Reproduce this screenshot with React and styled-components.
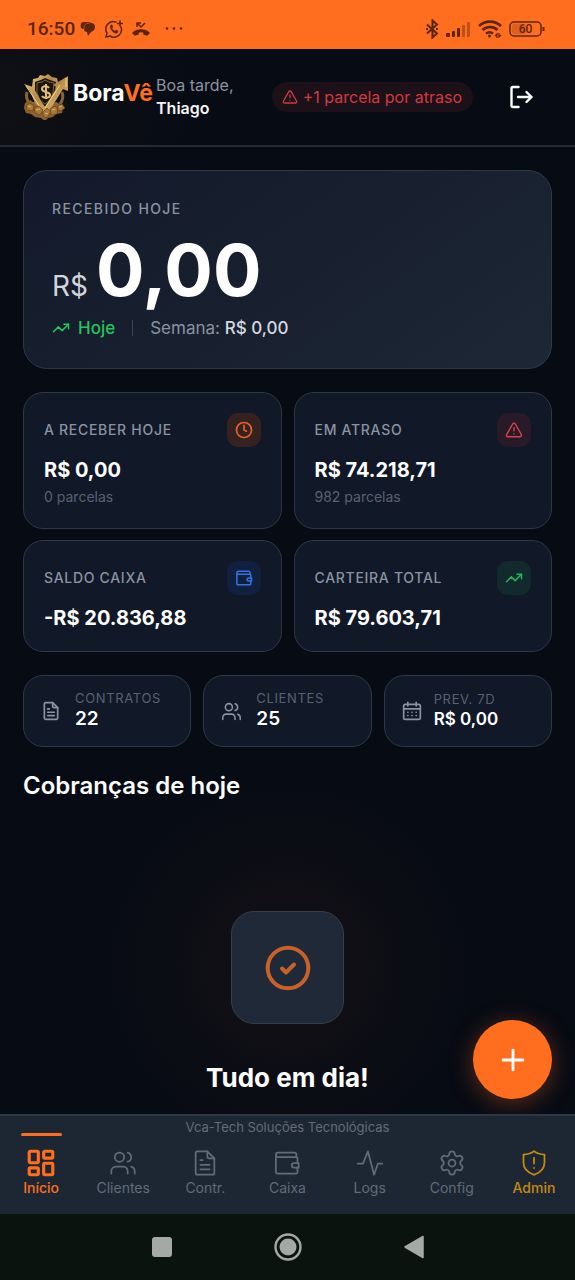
import React from 'react'
import styled, { createGlobalStyle } from 'styled-components'
import { Plus, Settings, TrendingUp, TriangleAlert, Users } from 'lucide-react'

const GlobalStyle = createGlobalStyle`
  * {
    box-sizing: border-box;
  }
  body {
    margin: 0;
    background: #070b14;
    font-family: Inter, 'Liberation Sans', sans-serif;
  }
  h1, h2, p {
    margin: 0;
  }
  svg {
    display: block;
    flex: none;
  }
`

const Screen = styled.div`
  min-height: 100vh;
  display: flex;
  flex-direction: column;
  color: #fff;
`

/* device bars */

const StatusBar = styled.div`
  display: flex;
  align-items: center;
  justify-content: space-between;
  height: 49px;
  padding: 8px 30px 0 27px;
  background: #ff6d1f;
  color: #5c2409;
`

const StatusGroup = styled.div`
  display: flex;
  align-items: center;
  gap: ${props => props.$gap}px;
`

const Clock = styled.span`
  margin-right: -4px;
  font: 500 19px/24px Roboto, sans-serif;
`

const SystemBar = styled.div`
  display: flex;
  align-items: center;
  justify-content: center;
  gap: 101px;
  height: 66px;
  background: #0b130f;
`

const SystemButton = styled.button`
  padding: 0;
  border: 0;
  background: none;
  color: #a5a9a6;
`

/* header */

const Header = styled.header`
  display: flex;
  align-items: center;
  height: 98px;
  padding: 0 23px;
  border-bottom: 2px solid #252a33;
  background: radial-gradient(circle at 0 50%, #0f1014, transparent 200px);
`

const Brand = styled.h1`
  margin: 0 3px 8px 5px;
  font-size: 23px;
  line-height: 32px;
  font-weight: 700;
  span {
    color: #ff6d1f;
  }
`

const Greeting = styled.p`
  font-size: 16px;
  line-height: 23px;
  color: #8b93a1;
  strong {
    display: block;
    font-weight: 600;
    color: #f4f5f7;
  }
`

const LateBadge = styled.div`
  display: flex;
  align-items: center;
  gap: 5px;
  height: 30px;
  margin-left: auto;
  padding: 0 11px 0 10px;
  border-radius: 15px;
  background: #1c1019;
  color: #cf3b42;
  font-size: 16px;
  white-space: nowrap;
`

const LogoutButton = styled.button`
  display: flex;
  justify-content: center;
  width: 62px;
  margin-left: 17px;
  padding: 16px 0;
  border: 0;
  background: none;
  color: #fff;
`

/* content */

const Main = styled.main`
  position: relative;
  flex: 1;
  padding: 23px 23px 18px;
  background: radial-gradient(circle at 50% 820px, #141115, transparent 190px);
`

const Card = styled.section`
  border: 1px solid #2f3846;
  border-radius: 20px;
  background: #111827;
`

const Hero = styled(Card)`
  padding: 28px;
  border-radius: 24px;
  background: linear-gradient(145deg, #13192a, #1d2735);
`

const Label = styled.h2`
  font-size: 14px;
  line-height: 20px;
  font-weight: 500;
  letter-spacing: 0.05em;
  text-transform: uppercase;
  color: #8b93a1;
`

const HeroLabel = styled(Label)`
  letter-spacing: 0.1em;
`

const HeroValue = styled.p`
  display: flex;
  align-items: baseline;
  gap: 8px;
  margin: 15px 0 10px;
  font-size: 72px;
  line-height: 72px;
  font-weight: 700;
  span {
    font-size: 28px;
    line-height: 28px;
    font-weight: 400;
    color: #d1d5db;
  }
`

const HeroFoot = styled.div`
  display: flex;
  align-items: center;
  gap: 17px;
  font-size: 17px;
  line-height: 24px;
  color: #8b93a1;
  strong {
    font-weight: 500;
    color: #d6d9de;
  }
`

const Trend = styled.span`
  display: flex;
  align-items: center;
  gap: 8px;
  font-weight: 500;
  color: #22c55e;
`

const Divider = styled.span`
  width: 1px;
  height: 16px;
  background: #3a4352;
`

const StatGrid = styled.div`
  display: grid;
  grid-template-columns: repeat(2, minmax(0, 1fr));
  gap: 11px 12px;
  margin: 23px 0;
`

const StatCard = styled(Card)`
  padding: 20px;
`

const StatHead = styled.div`
  display: flex;
  align-items: center;
  justify-content: space-between;
  margin-bottom: 10px;
`

const IconBox = styled.span`
  display: grid;
  place-items: center;
  width: 34px;
  height: 34px;
  border-radius: 11px;
  color: ${props => props.$color};
  background: ${props => props.$bg};
`

const StatValue = styled.p`
  font-size: 20px;
  line-height: 26px;
  font-weight: 700;
`

const StatNote = styled.p`
  margin-top: 2px;
  font-size: 14px;
  line-height: 23px;
  color: #596170;
`

const MiniGrid = styled.div`
  display: grid;
  grid-template-columns: repeat(3, minmax(0, 1fr));
  gap: 12px;
`

const MiniCard = styled(Card)`
  display: flex;
  align-items: center;
  gap: ${props => (props.$small ? 12 : 14)}px;
  height: 72px;
  padding: 0 17px;
  color: #8b93a1;
`

const MiniText = styled.div`
  padding-bottom: 5px;
`

const MiniLabel = styled(Label)`
  font-size: 13px;
  font-weight: 400;
  color: #596170;
`

const MiniValue = styled.p`
  font-size: ${props => (props.$small ? 17 : 19)}px;
  line-height: ${props => (props.$small ? 20 : 22)}px;
  font-weight: 600;
  color: #fff;
`

const SectionTitle = styled.h2`
  margin: 23px 0 109px;
  font-size: 24px;
  line-height: 32px;
  font-weight: 600;
`

const EmptyState = styled.div`
  display: flex;
  flex-direction: column;
  align-items: center;
  gap: 36px;
`

const EmptyIcon = styled.div`
  display: grid;
  place-items: center;
  width: 113px;
  height: 113px;
  border: 1px solid #353e4b;
  border-radius: 23px;
  background: #1f2937;
  color: #c7602b;
`

const EmptyTitle = styled.h2`
  font-size: 26px;
  line-height: 36px;
  font-weight: 700;
`

const AddButton = styled.button`
  position: absolute;
  right: 23px;
  bottom: 15px;
  display: grid;
  place-items: center;
  width: 79px;
  height: 79px;
  padding: 0;
  border: 0;
  border-radius: 50%;
  background: #ff6d1f;
  color: #fff;
  box-shadow: 0 4px 24px rgba(255, 109, 31, 0.35);
`

/* bottom navigation */

const Nav = styled.nav`
  position: relative;
  height: 100px;
  border-top: 2px solid #2d3744;
  background: #1d2733;
`

const Credit = styled.p`
  padding-top: 1px;
  font-size: 13px;
  line-height: 20px;
  text-align: center;
  color: #626b78;
`

const NavList = styled.div`
  display: grid;
  grid-template-columns: repeat(7, minmax(0, 1fr));
`

const NavItem = styled.a`
  display: flex;
  flex-direction: column;
  align-items: center;
  font-size: 14px;
  line-height: 20px;
  font-weight: ${props => (props.$strong ? 500 : 400)};
  text-decoration: none;
  color: ${props => props.$color || '#626b78'};
  &::before {
    content: '';
    width: 41px;
    height: 3px;
    margin: -4px 0 13px;
    border-radius: 2px;
    background: ${props => (props.$active ? '#ff6d1f' : 'transparent')};
  }
  svg {
    margin-bottom: 1px;
  }
`

const Icon = ({ size = 28, width = 1.5, children }) => (
  <svg width={size} height={size} viewBox='0 0 24 24' fill='none' stroke='currentColor'
    strokeWidth={width} strokeLinecap='round' strokeLinejoin='round' aria-hidden='true'>
    {children}
  </svg>
)

const HomeIcon = () => (
  <Icon width={2.7}>
    <rect x='1.900' y='1.900' width='7.800' height='9.900' rx='1' />
    <rect x='14.300' y='1.900' width='7.800' height='5.900' rx='1' />
    <rect x='1.900' y='16.200' width='7.800' height='5.900' rx='1' />
    <rect x='14.300' y='12.200' width='7.800' height='9.900' rx='1' />
  </Icon>
)

const FileIcon = props => (
  <Icon {...props}>
    <path d='M14 2H5.500A1.500 1.500 0 0 0 4 3.500v17A1.500 1.500 0 0 0 5.500 22h13a1.500 1.500 0 0 0 1.500-1.500V8z' />
    <path d='M14 2v4.500A1.500 1.500 0 0 0 15.500 8H20M8 9.500h2M8 13.500h8M8 17.500h8' />
  </Icon>
)

const WalletIcon = props => (
  <Icon {...props}>
    <path d='M20 7V4.500A1.500 1.500 0 0 0 18.500 3H4.500a2 2 0 0 0 0 4H20a1 1 0 0 1 1 1v4M2.500 5v14.500A1.500 1.500 0 0 0 4 21h16a1 1 0 0 0 1-1v-4' />
    <path d='M22 12v4h-4a2 2 0 0 1 0-4z' />
  </Icon>
)

const PulseIcon = () => (
  <Icon>
    <path d='M1.500 12.500h4.500l4.200-10.500 5.300 20 3.300-9.500h3.700' />
  </Icon>
)

const CalendarIcon = () => (
  <Icon size={20} width={2}>
    <rect x='2' y='4' width='20' height='18' rx='2' />
    <path d='M2 9.500h20M7 1.500V6M17 1.500V6' />
    <path d='M7 13.500h.1M12 13.500h.1M17 13.500h.1M7 17.500h.1M12 17.500h.1M17 17.500h.1' />
  </Icon>
)

const ClockIcon = () => (
  <Icon size={20} width={2}>
    <circle cx='12' cy='12' r='9' />
    <path d='M12 6.500V12l3 1.500' />
  </Icon>
)

const ShieldIcon = () => (
  <Icon>
    <path d='M12 1.800c2.500 2 5.500 2.700 9 3v7c0 5-3.500 8.400-9 10.400-5.500-2-9-5.400-9-10.400v-7c3.500-.3 6.500-1 9-3z' />
    <path d='M12 7.500v5M12 16.200v.1' />
  </Icon>
)

const LogoutIcon = () => (
  <Icon size={24} width={2.4}>
    <path d='M9.500 2H4A1.500 1.500 0 0 0 2.500 3.500v17A1.500 1.500 0 0 0 4 22h5.500' />
    <path d='M9 12h13.500M17.500 7l5 5-5 5' />
  </Icon>
)

const CheckIcon = () => (
  <svg width='46' height='46' viewBox='0 0 46 46' fill='none' stroke='currentColor' strokeWidth='4'
    strokeLinecap='round' strokeLinejoin='round' aria-hidden='true'>
    <circle cx='23' cy='23' r='20.300' />
    <path d='M17 23.500l4 4 8-8' />
  </svg>
)

const Emblem = () => (
  <svg width='45' height='46' viewBox='0 0 45 46' role='img' aria-label='BoraVê'>
    <defs>
      <linearGradient id='gold' x1='0' y1='0' x2='1' y2='1'>
        <stop offset='0' stopColor='#e3c681' />
        <stop offset='.45' stopColor='#b38643' />
        <stop offset='.7' stopColor='#cda35c' />
        <stop offset='1' stopColor='#6b4720' />
      </linearGradient>
    </defs>
    <path d='M10 5l5-1 2-3 5 1 3-2 4 3 5 1 1 5-2 12-4 6-6 5-7-4-5-7-2-8z' fill='url(#gold)' />
    <path d='M12 8l6-2 4-2 5 2 6 2-1 12-4 7-6 5-6-4-4-8z' fill='#19150f' />
    <path d='M14 9l5-1 3-2 4 2 5 1-1 10-3 7-5 4-5-4-3-7z' fill='none' stroke='#86622e' strokeWidth='1' />
    <path d='M4 18a19 15 0 0 0 3 12M39 18a19 15 0 0 1-2 12' fill='none' stroke='#8c642f' strokeWidth='3' />
    <path d='M2 29l5-3 3 2 5-1 4 4 4 2 5-3 5-2 4 2 3 4-1 5-6 1-3 3-5 1-3 3-4-3-6-1-4-3-5-1-2-5z' fill='#8d622e' />
    <path d='M1 10l9 3 8 14 4 6 12-20-4-2 15-9v15l-5-2-15 24-5-1-8-9-5-12z' fill='url(#gold)' />
    <path d='M22 34l15-23M43 4v9M3 12l16 24' fill='none' stroke='#edd698' strokeWidth='1' />
    <path d='M26 14c-2-3-7-2-7 1 0 4 8 2 8 6 0 3-6 4-8 1M23 10v15' fill='none' stroke='#e3bd73' strokeWidth='2' />
    <g fill='#a87837' stroke='#60401d' strokeWidth='.7'>
      <path d='M3 32l4-3 4 3-1 5-6-1zM11 34l5-2 4 4-3 5-5-2zM27 35l5-3 3 3-1 5-6 1zM35 32l4-2 3 4-4 3-4-1z' />
      <path d='M20 38l4-4 4 4-4 6-4-2z' />
    </g>
    <path d='M5 32l3 1M13 36l4-1M29 36l3-1M36 33l3-1M22 39l3 1' stroke='#dcb86f' strokeWidth='1' />
  </svg>
)

const StatusLeft = () => (
  <StatusGroup $gap={9}>
    <Clock>16:50</Clock>
    <svg width='16' height='16' viewBox='0 0 16 16' fill='currentColor'>
      <path d='M4 1h5a4 4 0 0 1 2 1c3 0 4 2 4 4 0 3-2 4-4 5l-3 4-1-4C5 11 4 9 4 8 1 8 0 6 1 3c0-1 1-2 3-2z' />
      <path d='M4 8V6c0-2 2-4 6-4' fill='none' stroke='#ff6d1f' strokeWidth='.6' />
    </svg>
    <svg width='18' height='18' viewBox='0 0 18 18' fill='none' stroke='currentColor' strokeWidth='1.500' strokeLinecap='round'>
      <path d='M11 2a7.500 7.500 0 0 0-9 11l-1 4 4-1a7.500 7.500 0 0 0 11-9M15 1v5M12.500 3.500h5' />
      <path d='M6 5c-2 2 1 7 4 8 2 1 3-1 3-2l-2-1-1 1c-1 0-3-2-3-3l1-1-1-2z' fill='currentColor' strokeWidth='.5' />
    </svg>
    <svg width='18' height='16' viewBox='0 0 18 16' fill='none' stroke='currentColor' strokeWidth='1.500'>
      <path d='M1 12c4-4 12-4 16 0l-2 2-3-1v-2a9 9 0 0 0-6 0v2l-3 1z' fill='currentColor' />
      <path d='M5 6V2h4M5 2l4 4 4-4' />
    </svg>
    <svg width='30' height='4' viewBox='-6 0 30 4' fill='currentColor'>
      <circle cx='2' cy='1.500' r='1.300' />
      <circle cx='9' cy='1.500' r='1.300' />
      <circle cx='16' cy='1.500' r='1.300' />
    </svg>
  </StatusGroup>
)

const StatusRight = () => (
  <StatusGroup $gap={7}>
    <svg width='14' height='20' viewBox='0 0 14 20' fill='none' stroke='currentColor' strokeWidth='2'>
      <path d='M2 5.500l10 9L7.500 18.500v-17l4.500 4-10 9' />
      <path d='M1 10h2M11 10h2' />
    </svg>
    <svg width='25' height='16' viewBox='0 0 25 16' fill='currentColor'>
      <rect x='0' y='12' width='4' height='4' rx='1' />
      <rect x='6' y='10' width='3' height='6' rx='1' />
      <rect x='11' y='7' width='3' height='9' rx='1' />
      <rect x='16' y='4' width='3' height='12' rx='1' opacity='.4' />
      <rect x='21' y='1' width='3' height='15' rx='1' opacity='.4' />
    </svg>
    <svg width='24' height='18' viewBox='0 0 24 18' fill='none' stroke='currentColor' strokeWidth='2.600'>
      <path d='M1 6a16 16 0 0 1 22 0M4.500 10a11 11 0 0 1 15 0M8 13.500a6 6 0 0 1 7 0' />
      <circle cx='11.500' cy='16' r='1.500' fill='currentColor' stroke='none' />
      <path d='M17 16l2-2v4M21 13v4l2-2' strokeWidth='1.200' />
    </svg>
    <svg width='36' height='16' viewBox='0 0 36 16' fill='none' stroke='currentColor' strokeWidth='1.500'>
      <rect x='1' y='1' width='31' height='14' rx='4' />
      <path d='M34.500 6v4' strokeWidth='2' />
      <rect x='3' y='3' width='14' height='10' rx='2' fill='currentColor' stroke='none' opacity='.2' />
      <text x='16.500' y='12' textAnchor='middle' fill='currentColor' stroke='none' fontFamily='Roboto' fontSize='12' fontWeight='500'>60</text>
    </svg>
  </StatusGroup>
)

const stats = [
  { label: 'A receber hoje', value: 'R$ 0,00', note: '0 parcelas', icon: <ClockIcon />, color: '#e5622a', bg: '#35211f' },
  { label: 'Em atraso', value: 'R$ 74.218,71', note: '982 parcelas', icon: <TriangleAlert size={18} strokeWidth={2} />, color: '#d5434a', bg: '#291a27' },
  { label: 'Saldo caixa', value: '-R$ 20.836,88', icon: <WalletIcon size={18} width={2} />, color: '#3473df', bg: '#122040' },
  { label: 'Carteira total', value: 'R$ 79.603,71', icon: <TrendingUp size={18} strokeWidth={2} />, color: '#22b45b', bg: '#122a2d' }
]

const minis = [
  { label: 'Contratos', value: '22', icon: <FileIcon size={20} width={2} /> },
  { label: 'Clientes', value: '25', icon: <Users size={21} strokeWidth={1.75} /> },
  { label: 'Prev. 7d', value: 'R$ 0,00', icon: <CalendarIcon />, small: true }
]

const links = [
  { label: 'Início', icon: <HomeIcon />, color: '#ff6d1f', active: true },
  { label: 'Clientes', icon: <Users size={28} strokeWidth={1.5} /> },
  { label: 'Contr.', icon: <FileIcon /> },
  { label: 'Caixa', icon: <WalletIcon /> },
  { label: 'Logs', icon: <PulseIcon /> },
  { label: 'Config', icon: <Settings size={28} strokeWidth={1.5} /> },
  { label: 'Admin', icon: <ShieldIcon />, color: '#c58a10' }
]

const App = () => (
  <Screen>
    <GlobalStyle />
    <StatusBar>
      <StatusLeft />
      <StatusRight />
    </StatusBar>
    <Header>
      <Emblem />
      <Brand>Bora<span>Vê</span></Brand>
      <Greeting>Boa tarde, <strong>Thiago</strong></Greeting>
      <LateBadge>
        <TriangleAlert size={16} strokeWidth={2} />
        +1 parcela por atraso
      </LateBadge>
      <LogoutButton aria-label='Sair'><LogoutIcon /></LogoutButton>
    </Header>
    <Main>
      <Hero>
        <HeroLabel>Recebido hoje</HeroLabel>
        <HeroValue><span>R$</span>0,00</HeroValue>
        <HeroFoot>
          <Trend><TrendingUp size={18} strokeWidth={2} />Hoje</Trend>
          <Divider />
          <span>Semana: <strong>R$ 0,00</strong></span>
        </HeroFoot>
      </Hero>
      <StatGrid>
        {stats.map(stat => (
          <StatCard key={stat.label}>
            <StatHead>
              <Label>{stat.label}</Label>
              <IconBox $color={stat.color} $bg={stat.bg}>{stat.icon}</IconBox>
            </StatHead>
            <StatValue>{stat.value}</StatValue>
            {stat.note && <StatNote>{stat.note}</StatNote>}
          </StatCard>
        ))}
      </StatGrid>
      <MiniGrid>
        {minis.map(mini => (
          <MiniCard key={mini.label} $small={mini.small}>
            {mini.icon}
            <MiniText>
              <MiniLabel>{mini.label}</MiniLabel>
              <MiniValue $small={mini.small}>{mini.value}</MiniValue>
            </MiniText>
          </MiniCard>
        ))}
      </MiniGrid>
      <SectionTitle>Cobranças de hoje</SectionTitle>
      <EmptyState>
        <EmptyIcon><CheckIcon /></EmptyIcon>
        <EmptyTitle>Tudo em dia!</EmptyTitle>
      </EmptyState>
      <AddButton aria-label='Adicionar'><Plus size={34} strokeWidth={2} /></AddButton>
    </Main>
    <Nav>
      <Credit>Vca-Tech Soluções Tecnológicas</Credit>
      <NavList>
        {links.map(link => (
          <NavItem key={link.label} href='#' $color={link.color} $active={link.active} $strong={!!link.color}>
            {link.icon}
            {link.label}
          </NavItem>
        ))}
      </NavList>
    </Nav>
    <SystemBar>
      <SystemButton aria-label='Recentes'>
        <svg width='22' height='22' viewBox='0 0 22 22'><rect x='1' y='1' width='20' height='20' rx='3' fill='currentColor' /></svg>
      </SystemButton>
      <SystemButton aria-label='Tela inicial'>
        <svg width='28' height='28' viewBox='0 0 28 28'>
          <circle cx='14' cy='14' r='12.500' fill='none' stroke='currentColor' strokeWidth='2.400' />
          <circle cx='14' cy='14' r='8.500' fill='currentColor' />
        </svg>
      </SystemButton>
      <SystemButton aria-label='Voltar'>
        <svg width='22' height='24' viewBox='0 0 22 24'><path d='M2 12L20 1.500v21z' fill='currentColor' stroke='currentColor' strokeWidth='1.500' strokeLinejoin='round' /></svg>
      </SystemButton>
    </SystemBar>
  </Screen>
)

export default App
